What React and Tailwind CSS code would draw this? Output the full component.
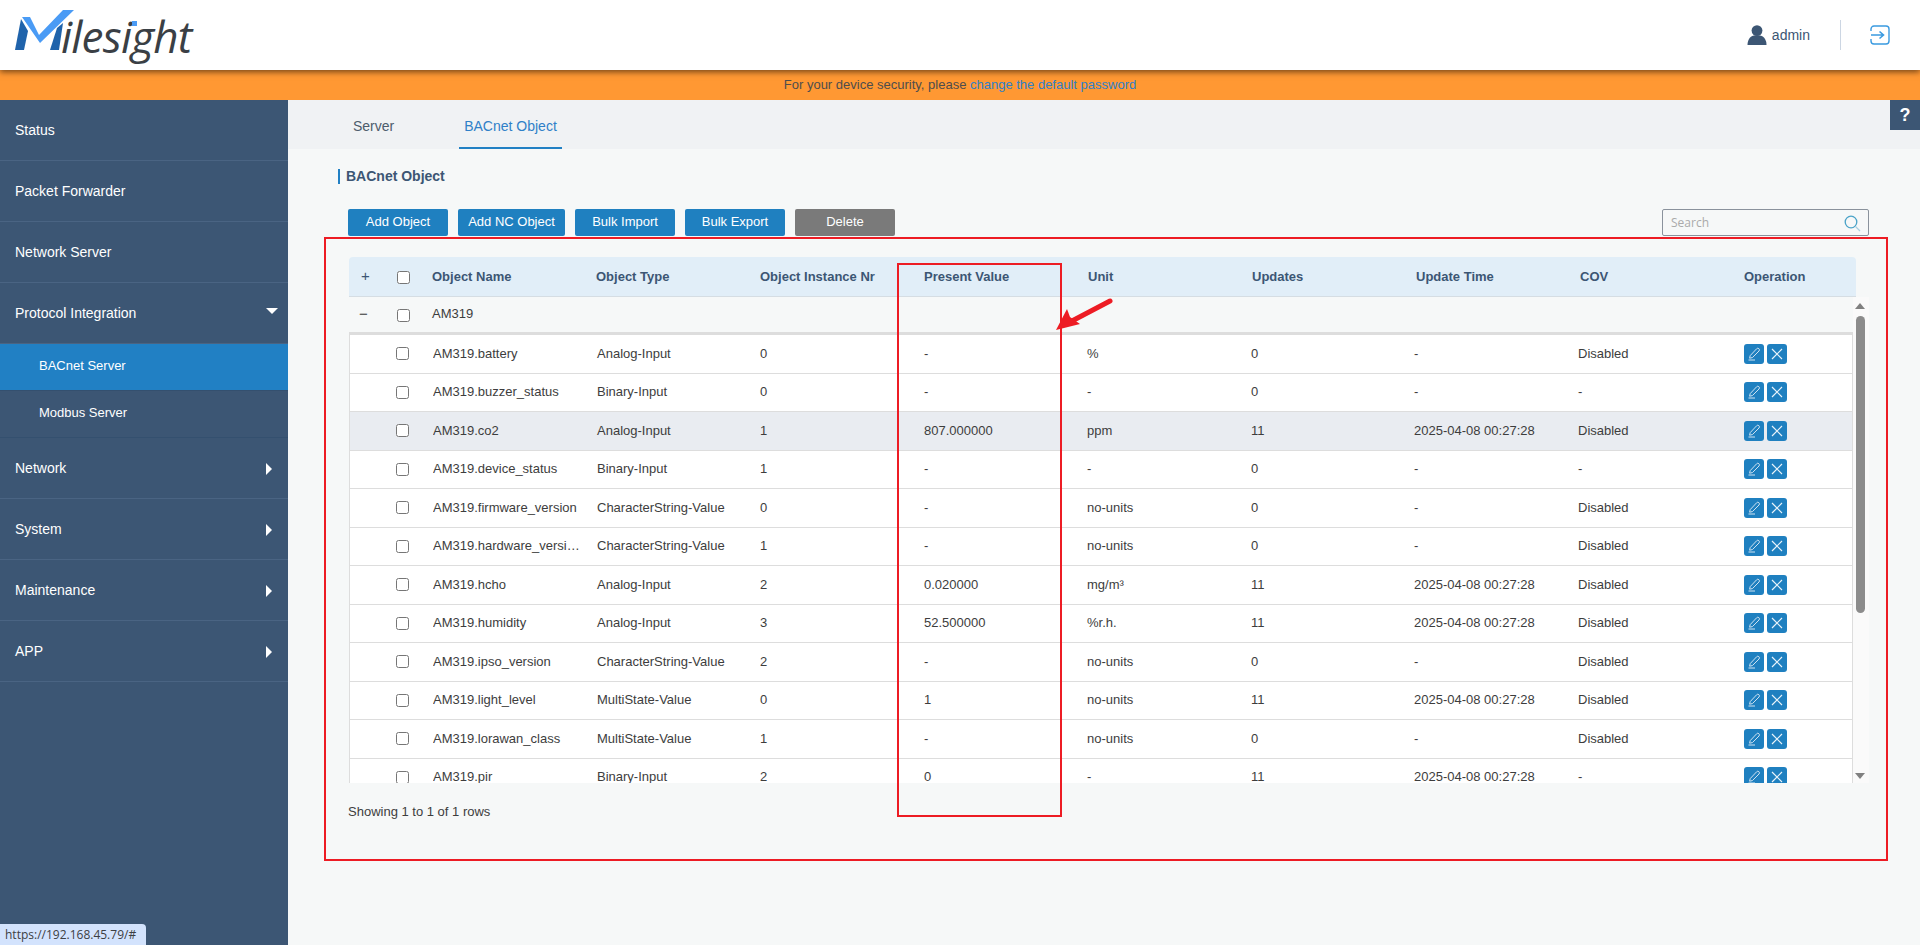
const FONT = "font-['Liberation_Sans',Arial,sans-serif]";

const NAV = [
  { label: 'Status', h: 'h-[61px]' },
  { label: 'Packet Forwarder', h: 'h-[61px]' },
  { label: 'Network Server', h: 'h-[61px]' },
  { label: 'Protocol Integration', h: 'h-[61px]', arrow: 'down' },
  { label: 'BACnet Server', sub: true, active: true },
  { label: 'Modbus Server', sub: true },
  { label: 'Network', h: 'h-[61px]', arrow: 'right' },
  { label: 'System', h: 'h-[61px]', arrow: 'right' },
  { label: 'Maintenance', h: 'h-[61px]', arrow: 'right' },
  { label: 'APP', h: 'h-[61px]', arrow: 'right' },
];

const COLUMNS = ['Object Name', 'Object Type', 'Object Instance Nr', 'Present Value', 'Unit', 'Updates', 'Update Time', 'COV', 'Operation'];

const T = '2025-04-08 00:27:28';
const ROWS = [
  ['AM319.battery', 'Analog-Input', '0', '-', '%', '0', '-', 'Disabled'],
  ['AM319.buzzer_status', 'Binary-Input', '0', '-', '-', '0', '-', '-'],
  ['AM319.co2', 'Analog-Input', '1', '807.000000', 'ppm', '11', T, 'Disabled'],
  ['AM319.device_status', 'Binary-Input', '1', '-', '-', '0', '-', '-'],
  ['AM319.firmware_version', 'CharacterString-Value', '0', '-', 'no-units', '0', '-', 'Disabled'],
  ['AM319.hardware_version', 'CharacterString-Value', '1', '-', 'no-units', '0', '-', 'Disabled'],
  ['AM319.hcho', 'Analog-Input', '2', '0.020000', 'mg/m³', '11', T, 'Disabled'],
  ['AM319.humidity', 'Analog-Input', '3', '52.500000', '%r.h.', '11', T, 'Disabled'],
  ['AM319.ipso_version', 'CharacterString-Value', '2', '-', 'no-units', '0', '-', 'Disabled'],
  ['AM319.light_level', 'MultiState-Value', '0', '1', 'no-units', '11', T, 'Disabled'],
  ['AM319.lorawan_class', 'MultiState-Value', '1', '-', 'no-units', '0', '-', 'Disabled'],
  ['AM319.pir', 'Binary-Input', '2', '0', '-', '11', T, '-'],
];

const BODY_COLS = 'grid-cols-[83px_164px_163px_164px_163px_164px_163px_164px_166px_1fr]';

function Logo() {
  return (
    <div className="relative w-[200px] h-[70px] ml-[15px] shrink-0">
      <svg className="absolute left-0 top-0" width="80" height="60" viewBox="0 0 80 60">
        <path d="M0 50 L6 19 L13 31 L9 50 Z" fill="#1f63ab" />
        <path d="M7 17 L15 17 L24 35 L48 10 L59 10 L25 43 Z" fill="#4a9bf5" />
        <path d="M35 50 L42 28 L48 23 L44 50 Z" fill="#1f63ab" />
      </svg>
      <span className="absolute left-[46px] top-[6px] font-['Open_Sans',sans-serif] italic font-normal text-[44px] leading-[60px] tracking-[-0.8px] text-[#3a3f45]">
        ilesight
      </span>
      <div className="absolute left-[117px] top-[21px] w-[5px] h-[5px] bg-[#4a9bf5]" />
    </div>
  );
}

function NavItem({ item }) {
  if (item.sub) {
    return (
      <div
        className={`flex items-center pl-[39px] pb-[2px] h-[47px] text-[13px] font-medium border-b border-[#34506f] ${item.active ? 'bg-[#2180c4]' : ''}`}
      >
        {item.label}
      </div>
    );
  }
  return (
    <div className={`relative flex items-center pl-[15px] text-[14px] border-b border-[#4a6483] ${item.h}`}>
      {item.label}
      {item.arrow === 'down' && (
        <div className="absolute right-[10px] top-[25px] w-0 h-0 border-x-[6px] border-x-transparent border-t-[6px] border-t-white" />
      )}
      {item.arrow === 'right' && (
        <div className="absolute right-[16px] top-[25px] w-0 h-0 border-y-[6px] border-y-transparent border-l-[6px] border-l-white" />
      )}
    </div>
  );
}

function Actions() {
  return (
    <div className="flex gap-[3px]">
      <button className="w-[20px] h-[20px] rounded-[3px] bg-[#1f80c0] flex items-center justify-center">
        <svg width="14" height="14" viewBox="0 0 14 14" fill="none" stroke="#cfe3f2" strokeWidth="1">
          <path d="M3.2 8.6 L9.6 1.8 a1.2 1.2 0 0 1 2.4 2.2 L5.4 10.6 L2.6 11.2 Z" />
          <path d="M1.5 13 L8 13" />
        </svg>
      </button>
      <button className="w-[20px] h-[20px] rounded-[3px] bg-[#1f80c0] flex items-center justify-center">
        <svg width="12" height="12" viewBox="0 0 12 12" stroke="#e8f2f9" strokeWidth="1.2">
          <path d="M1 1 L11 11 M11 1 L1 11" />
        </svg>
      </button>
    </div>
  );
}

function Row({ row }) {
  const hot = row[0] === 'AM319.co2';
  return (
    <div className={`grid ${BODY_COLS} items-center h-[38.5px] border-b border-[#dddddd] text-[#3d3d3d] ${hot ? 'bg-[#e9ecf1]' : 'bg-white'}`}>
      <div className="pl-[46px] flex items-center">
        <input type="checkbox" className="m-0" />
      </div>
      <div className="truncate pr-[17px] -mt-[1px] leading-[17px]">{row[0]}</div>
      {row.slice(1).map((v, i) => (
        <div key={i} className="-mt-[1px]">{v}</div>
      ))}
      <Actions />
    </div>
  );
}

function ObjectTable() {
  return (
    <div className="w-[1521px] ml-px">
      <div className="w-[1507px] h-[40px] bg-[#e1eef8] rounded-t-[4px] border-b border-[#d5dde3] grid grid-cols-[83px_repeat(8,164px)_1fr] items-center font-bold text-[#3c5674]">
        <div className="flex items-center">
          <span className="w-[48px] pl-[12px] text-[15px] font-normal">+</span>
          <input type="checkbox" className="m-0 mt-[1px]" />
        </div>
        {COLUMNS.map((c) => (
          <div key={c}>{c}</div>
        ))}
      </div>
      <div className="flex h-[486px] overflow-hidden">
        <div className="w-[1504px] shrink-0 overflow-hidden">
          <div className="h-[38px] flex items-center border-b-[3px] border-[#dddddd] text-[#3d3d3d]">
            <span className="w-[48px] pl-[10px] text-[15px]">−</span>
            <input type="checkbox" className="m-0 mt-[1px]" />
            <span className="ml-[22px] -mt-[2px]">AM319</span>
          </div>
          <div className="border-x border-[#dddddd]">
            {ROWS.map((r) => (
              <Row key={r[0]} row={r} />
            ))}
          </div>
        </div>
        <div className="relative w-[16px] bg-[#fafafa]">
          <div className="absolute left-[2px] top-[6px] w-0 h-0 border-x-[5px] border-x-transparent border-b-[6px] border-b-[#808080]" />
          <div className="absolute left-[3px] top-[19px] w-[9px] h-[297px] rounded-[5px] bg-[#8c8c8c]" />
          <div className="absolute left-[2px] top-[476px] w-0 h-0 border-x-[5px] border-x-transparent border-t-[6px] border-t-[#808080]" />
        </div>
      </div>
    </div>
  );
}

export default function App() {
  return (
    <div className={`relative w-full h-[945px] overflow-hidden bg-[#f6f8f8] text-[13px] ${FONT}`}>
      {/* top bar */}
      <header className="relative z-10 h-[70px] bg-white flex items-center justify-between shadow-[0_2px_6px_rgba(0,0,0,0.55)]">
        <Logo />
        <div className="flex items-center text-[#3c5674]">
          <svg width="20" height="20" viewBox="0 0 20 20" fill="#3c5674" className="-mt-[1px]">
            <circle cx="10" cy="5.6" r="5.4" />
            <path d="M0.5 20 C0.5 14 4 11 7 10.6 L13 10.6 C16 11 19.5 14 19.5 20 Z" />
          </svg>
          <span className="ml-[5px] text-[14px]">admin</span>
          <div className="ml-[30px] w-px h-[30px] bg-[#ccd6e3]" />
          <svg width="20" height="20" viewBox="0 0 20 20" fill="none" stroke="#3a9ae0" strokeWidth="1.4" className="ml-[29px] mr-[30px]">
            <path d="M1 6 V4 a3 3 0 0 1 3 -3 H16 a3 3 0 0 1 3 3 V16 a3 3 0 0 1 -3 3 H4 a3 3 0 0 1 -3 -3 V14" />
            <path d="M1 10 H13 M9.5 6.5 L13.5 10 L9.5 13.5" strokeWidth="1.6" />
          </svg>
        </div>
      </header>

      {/* security notice */}
      <div className="h-[30px] bg-[#ff9833] flex items-center justify-center text-[13px] text-[#4d4d4d]">
        For your device security, please&nbsp;
        <span className="text-[#2f80c8]">change the default password</span>
      </div>

      <div className="flex h-[845px]">
        <aside className="w-[288px] shrink-0 bg-[#3c5674] text-white">
          {NAV.map((n) => (
            <NavItem key={n.label} item={n} />
          ))}
        </aside>

        <main className="relative flex-1">
          <div className="h-[49px] bg-[#f0f2f4] flex pl-[65px] text-[14px]">
            <div className="w-[106px] text-[#4d5c6c] pt-[16px]">Server</div>
            <div className="w-[103px] h-[49px] pt-[16px] text-center text-[#2f80c8] border-b-[2px] border-[#2180c4]">BACnet Object</div>
          </div>
          <div className="absolute right-0 top-0 w-[30px] h-[30px] bg-[#3c5674] text-white font-bold text-[18px] flex items-center justify-center">?</div>

          <div className="pl-[60px] pt-[20px]">
            <div className="-ml-[10px] pl-[6px] h-[15px] border-l-2 border-[#2180c4] flex items-center font-bold text-[14px] text-[#3c5674]">
              BACnet Object
            </div>
            <div className="mt-[25px] flex items-start justify-between w-[1521px]">
              <div className="flex gap-[10px] text-white">
                <button className="w-[100px] h-[27px] pb-[2px] rounded-[2px] bg-[#1f80c0]">Add Object</button>
                <button className="w-[107px] h-[27px] pb-[2px] rounded-[2px] bg-[#1f80c0]">Add NC Object</button>
                <button className="w-[100px] h-[27px] pb-[2px] rounded-[2px] bg-[#1f80c0]">Bulk Import</button>
                <button className="w-[100px] h-[27px] pb-[2px] rounded-[2px] bg-[#1f80c0]">Bulk Export</button>
                <button className="w-[100px] h-[27px] pb-[2px] rounded-[2px] bg-[#7a7a7a]">Delete</button>
              </div>
              <div className="w-[207px] h-[27px] border border-[#8a929c] rounded-[2px] flex items-center justify-between pl-[8px] pr-[7px] text-[#aaaaaa] font-['Open_Sans',sans-serif] text-[12px]">
                Search
                <svg width="17" height="17" viewBox="0 0 17 17" fill="none" className="mt-[2px]">
                  <circle cx="7" cy="7" r="5.8" stroke="#4aa3c8" strokeWidth="1.3" />
                  <path d="M11.5 11.5 L16 16" stroke="#a9cfe0" strokeWidth="1.3" />
                </svg>
              </div>
            </div>
            <div className="mt-[21px]">
              <ObjectTable />
            </div>
            <p className="mt-[19px] text-[#3d3d3d]">Showing 1 to 1 of 1 rows</p>
          </div>
        </main>
      </div>

      {/* annotation boxes */}
      <div className="absolute left-[324px] top-[237px] w-[1564px] h-[624px] border-2 border-[#ed1c24] pointer-events-none" />
      <div className="absolute left-[897px] top-[263px] w-[165px] h-[554px] border-2 border-[#ed1c24] pointer-events-none" />
      <svg className="absolute left-[1050px] top-[295px] pointer-events-none" width="70" height="42" viewBox="0 0 70 42">
        <path d="M60 6 L20 27" stroke="#ed1c24" strokeWidth="5" strokeLinecap="round" />
        <path d="M6 35 L17 14 L20 22 L30 29 Z" fill="#ed1c24" />
      </svg>

      {/* link status bubble */}
      <div className="absolute left-0 bottom-0 w-[146px] h-[21px] pl-[5px] bg-[#d3e3fd] rounded-tr-[4px] text-[12px] leading-[21px] text-[#3c4043] font-['Open_Sans',sans-serif]">
        https://192.168.45.79/#
      </div>
    </div>
  );
}
